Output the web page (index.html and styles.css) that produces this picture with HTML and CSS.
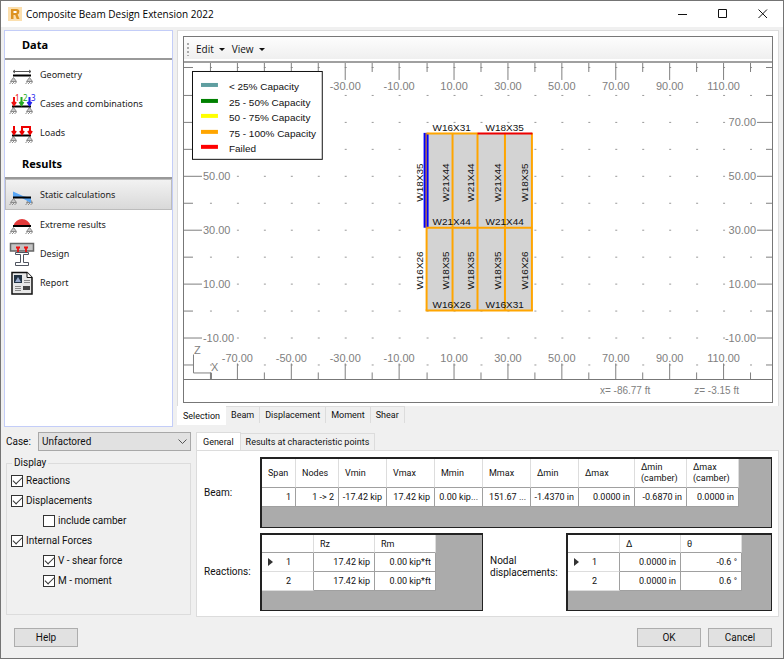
FILE: index.html
```html
<!DOCTYPE html>
<html lang="en">
<head>
<meta charset="utf-8">
<title>Composite Beam Design Extension 2022</title>
<link rel="stylesheet" href="styles.css">
</head>
<body>
<div class="window">
  <header class="titlebar">
    <svg class="app-icon" viewBox="0 0 14 14" width="14" height="14" aria-hidden="true"><rect width="14" height="14" fill="#fbdfae"/><path d="M3 2h5.500q2.800 0 2.800 2.800q0 2-1.700 2.600L11.500 12H8.700L7.200 8H5.500v4H3z" fill="#dd9320"/><path d="M5.500 4h2.300q1 0 1 1t-1 1H5.500z" fill="#fff"/></svg>
    <h1>Composite Beam Design Extension 2022</h1>
    <div class="window-controls">
      <button type="button" aria-label="Minimize"><svg viewBox="0 0 10 10" width="10" height="10"><path d="M0 5.500h9" /></svg></button>
      <button type="button" aria-label="Maximize"><svg viewBox="0 0 10 10" width="10" height="10"><path d="M.5 .5h8v8h-8z"/></svg></button>
      <button type="button" aria-label="Close"><svg viewBox="0 0 10 10" width="10" height="10"><path d="M.5 .5l8.500 8.500M9 .5L.5 9"/></svg></button>
    </div>
  </header>

  <div class="workspace">
    <nav class="sidebar">
      <h2>Data</h2>
      <a href="#geometry"><svg viewBox="0 0 26 26" width="26" height="26"><use href="#supports" y="3"/><path d="M4 9.500h18M6 8L4 9.500 6 11M20 8l2 1.500-2 1.500" fill="none" stroke="#555"/><path d="M4 13.500h18" stroke="#000" stroke-width="2"/></svg>Geometry</a>
      <a href="#cases"><svg viewBox="0 0 26 26" width="26" height="26"><use href="#supports" y="4"/><path d="M3 15.500h19" stroke="#000" stroke-width="2"/><g fill="none" stroke-width="2"><path d="M5 6v8M3 11l2 3 2-3" stroke="#e11"/><path d="M12.500 6v8M10.500 11l2 3 2-3" stroke="#2a2"/><path d="M20.500 6v8M18.500 11l2 3 2-3" stroke="#22e"/></g><g font-size="8"><text x="6" y="10" fill="#e11">1</text><text x="14" y="10" fill="#2a2">2</text><text x="22" y="10" fill="#22e">3</text></g></svg>Cases and combinations</a>
      <a href="#loads"><svg viewBox="0 0 26 26" width="26" height="26"><use href="#supports" y="4"/><path d="M3 15.500h19" stroke="#000" stroke-width="2"/><path d="M5 6v8M3 11l2 3 2-3M13 14V7h8v7M11 11l2 3 2-3M19 11l2 3 2-3" fill="none" stroke="#e00" stroke-width="2"/></svg>Loads</a>
      <h2 class="follow">Results</h2>
      <a class="current" href="#static"><svg viewBox="0 0 26 26" width="26" height="26"><use href="#supports" y="4"/><path d="M4 9.500L14 14l8 2v5l-9-5H4z" fill="#58a6f5"/><path d="M4 15.500h18" stroke="#000" stroke-width="2"/></svg>Static calculations</a>
      <a href="#extreme"><svg viewBox="0 0 26 26" width="26" height="26"><use href="#supports" y="3"/><path d="M4.500 13.500Q7 7 13 7t8.500 6.500z" fill="#e23a3a"/><path d="M4 14h18" stroke="#000" stroke-width="2"/></svg>Extreme results</a>
      <a href="#design"><svg viewBox="0 0 26 26" width="26" height="26"><path d="M1.500 2.500h23v7.500h-23z" fill="#c4c4c4" stroke="#666" stroke-width="1.500"/><path d="M6.500 11.500h13v2h-5v8h5v3h-13v-3h5v-8h-5z" fill="#fff" stroke="#505560"/><path d="M7 6.500h4M15 6.500h4M9 6v5M17 6v5" stroke="#e11" stroke-width="1.800"/></svg>Design</a>
      <a href="#report"><svg viewBox="0 0 26 26" width="26" height="26"><path d="M3 2.500h15l5 5V24H3z" fill="#e8e8e8" stroke="#111" stroke-width="1.500"/><path d="M18 2.500v5h5" fill="#fff" stroke="#111"/><path d="M5 5h8v8H5z" fill="#234"/><path d="M6 12l3-5 3 5z" fill="#9ac"/><path d="M15 10.500h6M15 12.500h6M6 16.500h6M6 18.500h6M6 20.500h6" stroke="#888"/><path d="M14 16h7v4h-7z" fill="#444"/></svg>Report</a>
    </nav>

    <main class="view">
      <div class="view-panel">
        <div class="frame">
          <div class="toolbar">
            <span class="grip"></span>
            <button type="button">Edit</button>
            <button type="button">View</button>
          </div>
          <svg class="chart" id="chart" viewBox="184 63 589 317" role="img" aria-label="Beam layout plan"></svg>
          <div class="status"><span>x= -86.77 ft</span><span>z= -3.15 ft</span></div>
        </div>
      </div>
      <div class="tabs tabs-below">
        <button type="button" class="active">Selection</button><button type="button">Beam</button><button type="button">Displacement</button><button type="button">Moment</button><button type="button">Shear</button>
      </div>
    </main>
  </div>

  <div class="details">
    <section class="options">
      <div class="case">
        <label for="case">Case:</label>
        <div class="select">
          <select id="case"><option>Unfactored</option></select>
          <svg viewBox="0 0 9 6" width="9" height="6"><path d="M.5 .5l4 4 4-4" fill="none" stroke="#555"/></svg>
        </div>
      </div>
      <fieldset>
        <legend>Display</legend>
        <label><input type="checkbox" checked>Reactions</label>
        <label><input type="checkbox" checked>Displacements</label>
        <label class="nested"><input type="checkbox">include camber</label>
        <label><input type="checkbox" checked>Internal Forces</label>
        <label class="nested"><input type="checkbox" checked>V - shear force</label>
        <label class="nested"><input type="checkbox" checked>M - moment</label>
      </fieldset>
    </section>

    <section class="results">
      <div class="tabs tabs-above">
        <button type="button" class="active">General</button><button type="button">Results at characteristic points</button>
      </div>
      <div class="results-panel">
        <span class="caption" id="beam-label">Beam:</span>
        <div class="grid-box beam-box">
          <table class="beam-table" aria-labelledby="beam-label">
            <colgroup><col class="w34"><col class="w43"><col class="w48"><col class="w48"><col class="w48"><col class="w48"><col class="w48"><col class="w56"><col class="w52"><col class="w52"></colgroup>
            <thead><tr><th>Span</th><th>Nodes</th><th>Vmin</th><th>Vmax</th><th>Mmin</th><th>Mmax</th><th>Δmin</th><th>Δmax</th><th>Δmin (camber)</th><th>Δmax (camber)</th></tr></thead>
            <tbody><tr><td>1</td><td>1 -&gt; 2</td><td>-17.42 kip</td><td>17.42 kip</td><td>0.00 kip...</td><td>151.67 ...</td><td>-1.4370 in</td><td>0.0000 in</td><td>-0.6870 in</td><td>0.0000 in</td></tr></tbody>
          </table>
        </div>
        <span class="caption" id="reactions-label">Reactions:</span>
        <div class="grid-box reactions-box">
          <table class="node-table" aria-labelledby="reactions-label">
            <colgroup><col class="w52"><col class="w61"><col class="w61"></colgroup>
            <thead><tr><th></th><th>Rz</th><th>Rm</th></tr></thead>
            <tbody>
              <tr class="selected"><th>1</th><td>17.42 kip</td><td>0.00 kip*ft</td></tr>
              <tr><th>2</th><td>17.42 kip</td><td>0.00 kip*ft</td></tr>
            </tbody>
          </table>
        </div>
        <span class="caption nodal" id="nodal-label">Nodal displacements:</span>
        <div class="grid-box nodal-box">
          <table class="node-table" aria-labelledby="nodal-label">
            <colgroup><col class="w52"><col class="w61"><col class="w61"></colgroup>
            <thead><tr><th></th><th>Δ</th><th>θ</th></tr></thead>
            <tbody>
              <tr class="selected"><th>1</th><td>0.0000 in</td><td>-0.6 °</td></tr>
              <tr><th>2</th><td>0.0000 in</td><td>0.6 °</td></tr>
            </tbody>
          </table>
        </div>
      </div>
    </section>
  </div>

  <footer class="actions">
    <button type="button">Help</button>
    <span class="spacer"></span>
    <button type="button">OK</button>
    <button type="button">Cancel</button>
  </footer>
</div>

<svg class="defs" width="0" height="0" aria-hidden="true">
  <symbol id="supports" viewBox="0 0 26 26" width="26" height="26" overflow="visible">
    <g fill="none" stroke="#8a8a8a"><path d="M4.500 12.500L1.500 16.500h6zM20.500 12.500l-3 4h6z" fill="#c8c8c8"/><path d="M.5 19l2-2M3 19l2-2M5.500 19l2-2M16.500 19l2-2M19 19l2-2M21.500 19l2-2"/></g>
  </symbol>
</svg>
<script src="chart.js"></script>
</body>
</html>
```

FILE: styles.css
```css
* { box-sizing: border-box; }

body {
  margin: 0;
  font: 10px/12px Roboto, "Liberation Sans", sans-serif;
  color: #111;
}

button, select, input { font: inherit; color: inherit; margin: 0; }

.window {
  min-height: 100vh;
  display: flex;
  flex-direction: column;
  background: #f0f0f0;
  border: 1px solid #747474;
}

/* Title bar */
.titlebar {
  height: 26px;
  display: flex;
  align-items: center;
  gap: 4px;
  padding-left: 7px;
  background: #fff;
}
.titlebar h1 {
  margin: 0;
  font: 10px/14px "Open Sans", sans-serif;
  color: #000;
}
.window-controls { display: flex; margin-left: auto; }
.window-controls button {
  width: 40px;
  height: 26px;
  padding: 0;
  border: 0;
  background: none;
  display: grid;
  place-items: center;
}
.window-controls path { fill: none; stroke: #111; }

/* Upper area */
.workspace {
  display: flex;
  gap: 4px;
  padding: 3px 4px 0 3px;
}
.sidebar {
  flex: 0 0 169px;
  min-height: 397px;
  background: #fff;
  border: 1px solid #c3cdf8;
  font: 9px/14px "Noto Sans", sans-serif;
}
.sidebar h2 {
  margin: 0;
  height: 29px;
  padding: 1px 0 0 17px;
  font: bold 11px/26px "Noto Sans", sans-serif;
  color: #000;
  border-bottom: 2px solid #999;
}
.sidebar .follow { margin-top: 3px; }
.sidebar a {
  height: 29px;
  display: flex;
  align-items: center;
  gap: 5px;
  padding-left: 3px;
  color: #222;
  text-decoration: none;
  border: 1px solid transparent;
}
.sidebar a svg { overflow: visible; }
.sidebar a.current {
  height: 31px;
  border-color: #bcbcbc;
  background: linear-gradient(#f2f2f2, #d9d9d9);
}

.view { flex: 1; min-width: 0; }
.view-panel {
  padding: 5px 5px 3px;
  background: #fff;
  border: 1px solid #dcdcdc;
  border-bottom: 0;
}
.frame { border: 1px solid #777; }
.toolbar {
  height: 26px;
  display: flex;
  align-items: center;
  background: linear-gradient(#fdfdfd, #eee);
  border-bottom: 2px solid #a0a0a0;
  box-shadow: inset 0 -2px #fff;
  font: 10px/14px "Open Sans", sans-serif;
}
.grip {
  width: 2px;
  height: 13px;
  margin: 0 4px 0 3px;
  background: repeating-linear-gradient(#aaa 0 2px, transparent 2px 4px);
}
.toolbar button {
  display: flex;
  align-items: center;
  gap: 5px;
  padding: 0 4px 0 3px;
  border: 0;
  background: none;
}
.toolbar button::after {
  content: "";
  border: 3px solid transparent;
  border-top-color: #111;
  border-bottom: 0;
}
.chart {
  display: block;
  width: 100%;
  height: auto;
  font-family: "Liberation Sans", sans-serif;
}
.status {
  height: 23px;
  display: flex;
  justify-content: flex-end;
  align-items: center;
  gap: 44px;
  padding-right: 33px;
  border-top: 1px solid #777;
  font: 10px/12px "Liberation Sans", sans-serif;
  color: #808080;
}

/* Tabs */
.tabs { display: flex; font-size: 9px; }
.tabs button {
  height: 17px;
  padding: 0 5px;
  border: 1px solid #dcdcdc;
  border-left: 0;
  background: #f0f0f0;
  white-space: nowrap;
}
.tabs .active {
  height: 19px;
  padding: 0 6px;
  background: #fff;
}
.tabs-below button { border-bottom: 0; }
.tabs-below .active { border: 0; }
.tabs-above { align-items: flex-end; }
.tabs-above button { border-bottom: 0; }
.tabs-above .active { height: 18px; border-left: 1px solid #dcdcdc; }

/* Lower area */
.details {
  display: flex;
  gap: 5px;
  padding: 5px 4px 0 5px;
}
.options { flex: 0 0 185px; display: flex; flex-direction: column; }
.case { display: flex; align-items: center; gap: 7px; }
.case label { width: 25px; white-space: nowrap; }
.select { position: relative; flex: 1; }
.select select {
  width: 100%;
  height: 19px;
  padding: 0 3px;
  appearance: none;
  border: 1px solid #a8a8a8;
  border-radius: 0;
  background: #e1e1e1;
}
.select svg { position: absolute; right: 4px; top: 7px; pointer-events: none; }

fieldset {
  flex: 1;
  margin: 6px 0 2px;
  padding: 2px 4px 0;
  border: 1px solid #dcdcdc;
  min-width: 0;
}
fieldset legend { padding: 0 2px; margin-left: 1px; }
fieldset label {
  height: 20px;
  display: flex;
  align-items: center;
  gap: 3px;
}
fieldset .nested { padding-left: 32px; }
fieldset input {
  appearance: none;
  width: 12px;
  height: 12px;
  border: 1px solid #333;
  background: #fff;
  display: grid;
  place-items: center;
}
fieldset input:checked::after {
  content: "";
  width: 8px;
  height: 4px;
  margin-bottom: 3px;
  border: solid #333;
  border-width: 0 0 1px 1px;
  transform: rotate(-45deg);
}

.results { flex: 1; min-width: 0; }
.results-panel {
  display: grid;
  grid-template-columns: 49px 223px 69px 1fr;
  gap: 5px 7px;
  align-items: center;
  padding: 6px 6px 5px 7px;
  background: #fff;
  border: 1px solid #dcdcdc;
}
.caption.nodal { align-self: start; padding-top: 22px; }
.grid-box {
  overflow: hidden;
  background: #ababab;
  border: 2px solid #222;
  border-width: 2px 1px 1px 2px;
}
.beam-box { grid-column: 2 / -1; height: 71px; }
.reactions-box, .nodal-box { height: 78px; }

table {
  border-collapse: separate;
  border-spacing: 0;
  table-layout: fixed;
  background: #fff;
  font-size: 9px;
}
.beam-table { width: 477px; }
.node-table { width: 174px; }
.w34 { width: 34px; }
.w43 { width: 43px; }
.w48 { width: 48px; }
.w52 { width: 52px; }
.w56 { width: 56px; }
.w61 { width: 61px; }
th, td {
  padding: 0;
  border-right: 1px solid #a0a0a0;
  border-bottom: 1px solid #a0a0a0;
  white-space: nowrap;
}
th { font-weight: normal; text-align: left; }
thead th { padding-left: 6px; border-right-color: #ddd; }
td { height: 19px; padding-right: 4px; text-align: right; }
.beam-table thead th { height: 29px; line-height: 11px; white-space: normal; }
.node-table thead th { height: 18px; }
.node-table tbody th { padding-left: 24px; position: relative; border-bottom-color: #ddd; }
.selected th::before {
  content: "";
  position: absolute;
  left: 6px;
  top: 5px;
  border: 4px solid transparent;
  border-left: 5px solid #333;
  border-right: 0;
}

/* Footer buttons */
.actions {
  display: flex;
  gap: 7px;
  padding: 11px 11px 11px 13px;
}
.actions button {
  width: 64px;
  height: 19px;
  padding: 0;
  border: 1px solid #adadad;
  background: #e1e1e1;
}
.spacer { flex: 1; }
.defs { position: absolute; }
```

FILE: chart.js
```js
const parts = [];
const px = v => Math.round(426.5 + 2.706 * v) + 0.5;
const py = v => Math.round(311 - 2.706 * v) + 0.5;
const line = (x1, y1, x2, y2, color = "#808080", w = 1) =>
  parts.push(`<path d="M${x1} ${y1}L${x2} ${y2}" stroke="${color}" stroke-width="${w}"/>`);
const text = (x, y, s, opts = "") => parts.push(`<text x="${x}" y="${y}" ${opts}>${s}</text>`);
const axis = 'font-size="11" fill="#808080"';

// Grid points
for (let x = -80; x <= 120; x += 10) {
  for (let y = -20; y <= 90; y += 10) {
    const labelled = Math.abs(y % 20) === 10 && y < 90;
    if (labelled && (x === -80 || x === 120)) continue;
    line(px(x) - 0.5, py(y), px(x) + 1.5, py(y), "#999");
  }
}

// Horizontal rulers; the legend covers the top-left labels
for (let x = -80; x <= 120; x += 10) {
  const major = Math.abs(x % 20) === 10;
  line(px(x), 63, px(x), major ? 80 : 72);
  line(px(x), major ? 364 : 373, px(x), 380);
  if (major) {
    if (x > -50) text(px(x), 90, x.toFixed(2), axis + ' text-anchor="middle"');
    text(px(x), 363, x.toFixed(2), axis + ' text-anchor="middle"');
  }
}

// Vertical rulers
for (let y = -20; y <= 90; y += 10) {
  const major = Math.abs(y % 20) === 10 && y < 90;
  line(184, py(y), major ? 202 : 193, py(y));
  line(major ? 758 : 767, py(y), 773, py(y));
  if (major) {
    if (y < 70) text(203, py(y) + 4, y.toFixed(2), axis);
    text(757, py(y) + 4, y.toFixed(2), axis + ' text-anchor="end"');
  }
}

// Axis marker
parts.push('<path d="M193.5 355v18.500h18v6" fill="none" stroke="#808080"/>');
text(194, 355, "Z", axis);
text(211, 372, "X", axis);

// Slab and beams
parts.push('<rect x="427" y="133" width="106" height="178" fill="#d3d3d3"/>');
const orange = "#ffa500";
line(426.5, 133, 426.5, 228, "#00f", 5);
line(426.5, 133, 426.5, 228, orange, 1);
line(427, 228, 427, 311, orange, 2);
[453, 478, 505.5, 532.5].forEach(x => line(x, 133, x, 311, orange, 2));
line(427, 133.5, 478, 133.5, orange, 2);
line(427, 228, 533, 228, orange, 2);
line(426, 311, 533.5, 311, orange, 2);
line(478, 133.5, 533, 133.5, "#e00", 2);

const label = 'font-size="10" fill="#111"';
[[131, "W16X31", "W18X35"], [225, "W21X44", "W21X44"], [308, "W16X26", "W16X31"]].forEach(([y, a, b]) => {
  text(433, y, a, label);
  text(486, y, b, label);
});
const columns = [423, 449, 474, 502, 529];
[[202, ["W18X35", "W21X44", "W21X44", "W21X44", "W18X35"]],
 [290, ["W16X26", "W18X35", "W18X35", "W18X35", "W16X26"]]].forEach(([y, names]) =>
  names.forEach((n, i) => parts.push(`<text transform="translate(${columns[i]} ${y}) rotate(-90)" ${label}>${n}</text>`)));

// Legend
parts.push('<rect x="192.5" y="71.500" width="130" height="88" fill="#fff" stroke="#111"/>');
[["#5f9ea0", "&lt; 25% Capacity"], ["#008000", "25 - 50% Capacity"], ["#ffff00", "50 - 75% Capacity"],
 ["#ffa500", "75 - 100% Capacity"], ["#ff0000", "Failed"]].forEach(([c, s], i) => {
  const y = 85 + Math.round(i * 15.6);
  line(201, y, 218, y, c, 4);
  text(229, y + 5, s, label);
});

document.getElementById("chart").innerHTML = parts.join("");
```
